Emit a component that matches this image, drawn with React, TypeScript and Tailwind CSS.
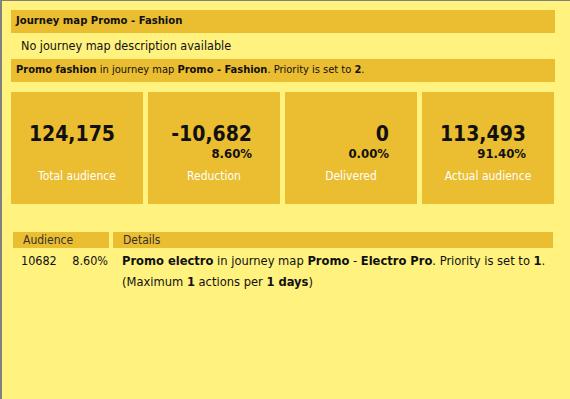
import React from 'react'

type Stat = { value: string; pct?: string; label: string }

const stats: Stat[] = [
  { value: '124,175', label: 'Total audience' },
  { value: '-10,682', pct: '8.60%', label: 'Reduction' },
  { value: '0', pct: '0.00%', label: 'Delivered' },
  { value: '113,493', pct: '91.40%', label: 'Actual audience' },
]

const font = { fontFamily: '"DejaVu Sans Condensed", "DejaVu Sans", Tahoma, sans-serif' }

const StatCard = ({ stat }: { stat: Stat }) => (
  <div className="flex h-[112px] w-[132px] flex-col bg-[#ebbd30]">
    <div className="mt-[30px] flex flex-col items-end pr-[28px] text-[#111]">
      <div className="h-[24px] text-[21px] leading-[24px] font-bold">{stat.value}</div>
      <div className="h-[16px] text-[13px] leading-[16px] font-bold">{stat.pct}</div>
    </div>
    <div className="mt-[6px] text-center text-[12px] leading-[16px] text-white">{stat.label}</div>
  </div>
)

const App = () => {
  return (
    <div
      className="h-[399px] w-[570px] overflow-hidden border-t border-l-2 border-[#808080] bg-[#fff27f] pt-[9px] pl-[9px] text-[#111]"
      style={font}
    >
      <div className="w-[544px]">
        <div className="flex h-[23px] items-center bg-[#ebbd30] pl-[5px] text-[11.2px] font-bold">
          Journey map Promo - Fashion
        </div>
        <div className="flex h-[26px] items-center pl-[10px] text-[12.5px]">
          No journey map description available
        </div>
        <div className="flex h-[23px] items-center bg-[#ebbd30] pl-[5px] text-[11px]">
          <b>Promo fashion</b>&nbsp;in journey map&nbsp;<b>Promo - Fashion</b>. Priority is set to&nbsp;<b>2</b>.
        </div>

        <div className="mt-[10px] flex gap-[5px]">
          {stats.map((s) => (
            <StatCard key={s.label} stat={s} />
          ))}
        </div>

        <div className="mt-[28px] ml-[2px] flex gap-[4px] text-[12px]">
          <div className="w-[96px]">
            <div className="h-[16px] bg-[#ebbd30] pl-[10px] leading-[16px] text-[#333]">Audience</div>
            <div className="flex justify-between pt-[2px] pr-[1px] pl-[8px] text-[12.5px] leading-[21px]">
              <span>10682</span>
              <span>8.60%</span>
            </div>
          </div>
          <div className="w-[440px]">
            <div className="h-[16px] bg-[#ebbd30] pl-[10px] leading-[16px] text-[#333]">Details</div>
            <div className="pt-[2px] pl-[9px] text-[12.8px] leading-[21px]">
              <b>Promo electro</b> in journey map <b>Promo</b> - <b>Electro Pro</b>. Priority is set to <b>1</b>.
              <br />
              (Maximum <b>1</b> actions per <b>1 days</b>)
            </div>
          </div>
        </div>
      </div>
    </div>
  )
}

export default App
